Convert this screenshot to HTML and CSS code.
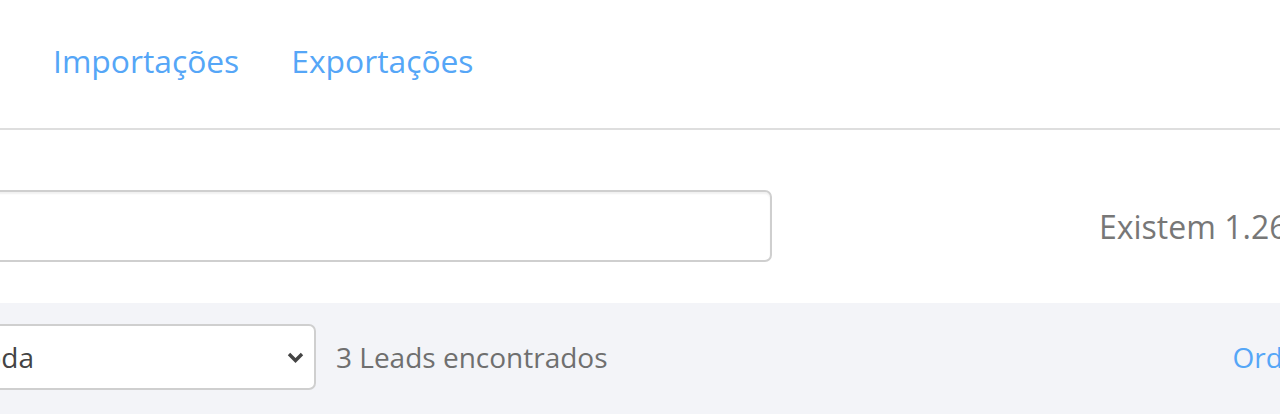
FILE: index.html
```html
<!DOCTYPE html>
<html lang="pt">
<head>
<meta charset="utf-8">
<title>Leads</title>
<link rel="stylesheet" href="styles.css">
</head>
<body>
<div class="page">
  <nav class="tabs">
    <a class="tab" href="#">Importações</a>
    <a class="tab" href="#">Exportações</a>
  </nav>
  <section class="search-row">
    <input class="search" type="text">
    <div class="count">Existem 1.264 leads na sua base</div>
  </section>
  <section class="filter-bar">
    <div class="select">
      <span class="select-text">Toda</span>
      <svg class="chevron" width="17" height="12" viewBox="0 0 17 12"><path d="M2 3 L8.5 9.5 L15 3" fill="none" stroke="#444" stroke-width="3.4"/></svg>
    </div>
    <span class="found">3 Leads encontrados</span>
    <a class="order" href="#">Ordenar por</a>
  </section>
</div>
</body>
</html>
```
FILE: styles.css
```css
html, body {
  margin: 0;
  padding: 0;
  overflow: hidden;
  background: #fff;
  font-family: "Open Sans", "Liberation Sans", sans-serif;
}
.page {
  width: 1280px;
  overflow: hidden;
}
.tabs {
  box-sizing: border-box;
  height: 130px;
  border-bottom: 2px solid #dedede;
  display: flex;
  align-items: center;
  gap: 52px;
  padding-left: 53px;
}
.tab {
  color: #55a6f7;
  text-decoration: none;
  font-size: 31.8px;
  margin-top: -8px;
}
.search-row {
  box-sizing: border-box;
  display: flex;
  align-items: center;
  height: 173px;
  padding-top: 60px;
  padding-bottom: 41px;
  white-space: nowrap;
}
.search {
  margin-left: -300px;
  width: 1072px;
  height: 72px;
  box-sizing: border-box;
  border: 2px solid #cfcfcf;
  border-radius: 7px;
  box-shadow: inset 0 2px 2px rgba(0,0,0,0.06);
  background: #fff;
  flex: none;
}
.count {
  margin-left: 327px;
  font-size: 32px;
  color: #777;
  flex: none;
}
.filter-bar {
  background: #f3f4f8;
  height: 111px;
  box-sizing: border-box;
  padding-top: 21px;
  display: flex;
  align-items: flex-start;
  white-space: nowrap;
}
.select {
  margin-left: -49px;
  width: 365px;
  height: 66px;
  box-sizing: border-box;
  border: 2px solid #cfcfcf;
  border-radius: 7px;
  background: #fff;
  display: flex;
  align-items: center;
  padding: 0 10px 0 16px;
  flex: none;
}
.select-text {
  flex: 1;
  font-size: 28px;
  color: #444;
}
.chevron {
  flex: none;
}
.found {
  margin-left: 20px;
  font-size: 28px;
  color: #6f6f6f;
  flex: none;
  line-height: 66px;
}
.order {
  margin-left: 625px;
  font-size: 28px;
  line-height: 66px;
  color: #55a6f7;
  text-decoration: none;
  flex: none;
}
```
